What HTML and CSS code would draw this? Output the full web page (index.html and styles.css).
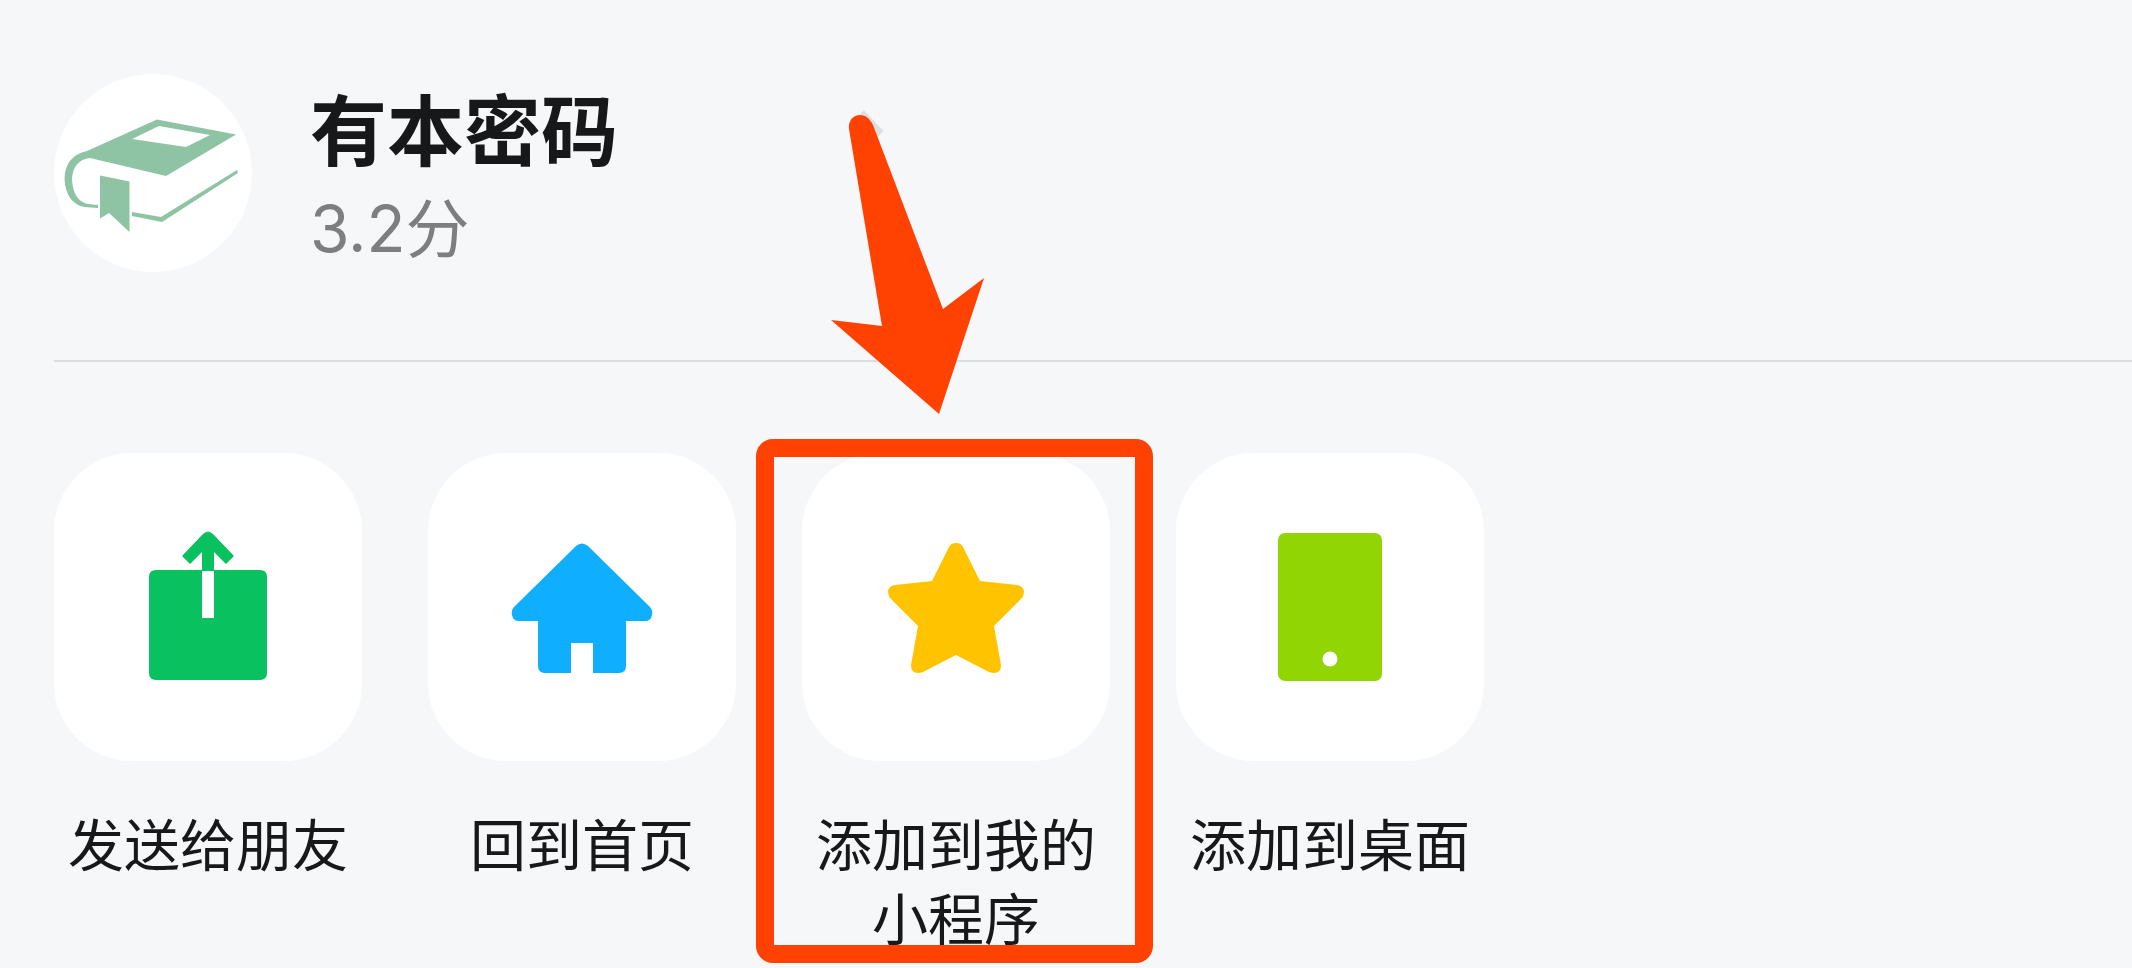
FILE: index.html
```html
<!DOCTYPE html>
<html lang="zh-CN">
<head>
<meta charset="utf-8">
<meta name="viewport" content="width=device-width, initial-scale=1">
<title>有本密码</title>
<link rel="stylesheet" href="styles.css">
</head>
<body>
<main class="sheet">
  <header class="profile">
    <svg class="avatar" viewBox="0 0 198 198" aria-hidden="true">
      <circle cx="99" cy="99" r="99" fill="#fff"/>
      <g fill="#8ec3a4">
        <path fill-rule="evenodd" d="M103 45.500L182 60.500L112 102L36 84Q19 86 18 105Q19 127 34 130L44 131V134L30 133Q12 129 10.500 105Q11 82 33 77ZM105 52L78 65L132 73L156 61Z"/>
        <path d="M46 101.500L75.500 107.500V158L55 139L46 144.500Z"/>
        <path d="M78 138L107 143L183 96L184 99L108 148L78 142Z"/>
      </g>
    </svg>
    <div class="info">
      <div class="title-row">
        <h1 class="title">有本密码</h1>
        <svg class="chevron" viewBox="0 0 24 48" aria-hidden="true"><path d="M2 9L20 28L2 47" fill="none" stroke="#dedfe1" stroke-width="5"/></svg>
      </div>
      <p class="score">3.2分</p>
    </div>
  </header>

  <nav class="actions" aria-label="小程序操作">
    <button class="action" type="button">
      <svg class="tile" viewBox="0 0 308 308" aria-hidden="true">
        <path fill="#0ac160" d="M102 117H206Q213 117 213 124V220Q213 227 206 227H102Q95 227 95 220V124Q95 117 102 117Z"/>
        <path fill="#fff" d="M148 118H160V165H148Z"/>
        <path fill="#0ac160" d="M149 81Q154 76 159 81L180 103L172 111L160 99V118H148V99L136 111L128 103Z"/>
      </svg>
      <span class="label">发送给朋友</span>
    </button>
    <button class="action" type="button">
      <svg class="tile" viewBox="0 0 308 308" aria-hidden="true">
        <path fill="#10aeff" d="M148 93Q154 88 160 93L222 154Q225 157 224 162Q223 168 217 168H198V213Q198 220 191 220H165V190H143V220H117Q110 220 110 213V168H91Q85 168 84 162Q83 157 86 154Z"/>
      </svg>
      <span class="label">回到首页</span>
    </button>
    <button class="action" type="button">
      <svg class="tile" viewBox="0 0 308 308" aria-hidden="true">
        <path fill="#ffc300" d="M147 94Q149 90 154 90Q159 90 161 94L178 128L215 132Q221 133 222 138Q222 143 219 146L192 173L199 212Q199 220 192 220Q190 220 187 219L154 202L121 219Q118 220 116 220Q109 220 109 212L116 173L89 146Q86 143 86 138Q87 133 93 132L130 128Z"/>
      </svg>
      <span class="label">添加到我的小程序</span>
      <span class="frame"></span>
      <svg class="arrow" viewBox="0 0 220 350" aria-hidden="true">
        <path fill="#ff4202" d="M139 323L31 229L82 235L49 38C48 29 54 24 60 24C66 24 70 28 73 34L143 218L184 187Z"/>
      </svg>
    </button>
    <button class="action" type="button">
      <svg class="tile" viewBox="0 0 308 308" aria-hidden="true">
        <rect x="102" y="80" width="104" height="148" rx="7" fill="#91d504"/>
        <circle cx="154" cy="206" r="7.500" fill="#fff"/>
      </svg>
      <span class="label">添加到桌面</span>
    </button>
  </nav>
</main>
</body>
</html>
```
FILE: styles.css
```css
* {
  box-sizing: border-box;
}

body {
  margin: 0;
  background: #f6f7f9;
  color: #17181a;
  font-family: "Noto Sans CJK SC", "Noto Sans", sans-serif;
}

.sheet {
  padding: 74px 0 15px 54px;
}

.profile {
  display: flex;
  gap: 58px;
  padding-bottom: 82px;
  border-bottom: 2px solid #dcdde0;
}

.avatar {
  flex: none;
  width: 198px;
  height: 198px;
}

.info {
  display: flex;
  flex-direction: column;
}

.title-row {
  display: flex;
  align-items: center;
}

.title {
  min-width: 550px;
  margin: 0;
  font-size: 77px;
  font-weight: 700;
  line-height: 106px;
}

.chevron {
  width: 24px;
  height: 48px;
}

.score {
  margin: 0;
  color: #7d7e80;
  font-family: Inter, "Noto Sans CJK SC", sans-serif;
  font-size: 64px;
  line-height: 98px;
}

.actions {
  display: flex;
  align-items: flex-start;
  gap: 66px;
  padding-top: 91px;
}

.action {
  position: relative;
  display: flex;
  flex-direction: column;
  align-items: center;
  gap: 44px;
  width: 308px;
  padding: 0;
  border: 0;
  background: none;
  color: inherit;
  font: inherit;
  cursor: pointer;
}

.tile {
  width: 308px;
  height: 308px;
  border-radius: 78px;
  background: #fff;
}

.label {
  font-size: 56px;
  line-height: 74px;
  text-align: center;
}

.frame {
  position: absolute;
  inset: -14px -43px -10px -46px;
  border: 18px solid #ff4202;
  border-radius: 17px;
}

.arrow {
  position: absolute;
  top: -362px;
  left: -2px;
  width: 220px;
  height: 350px;
}
```
